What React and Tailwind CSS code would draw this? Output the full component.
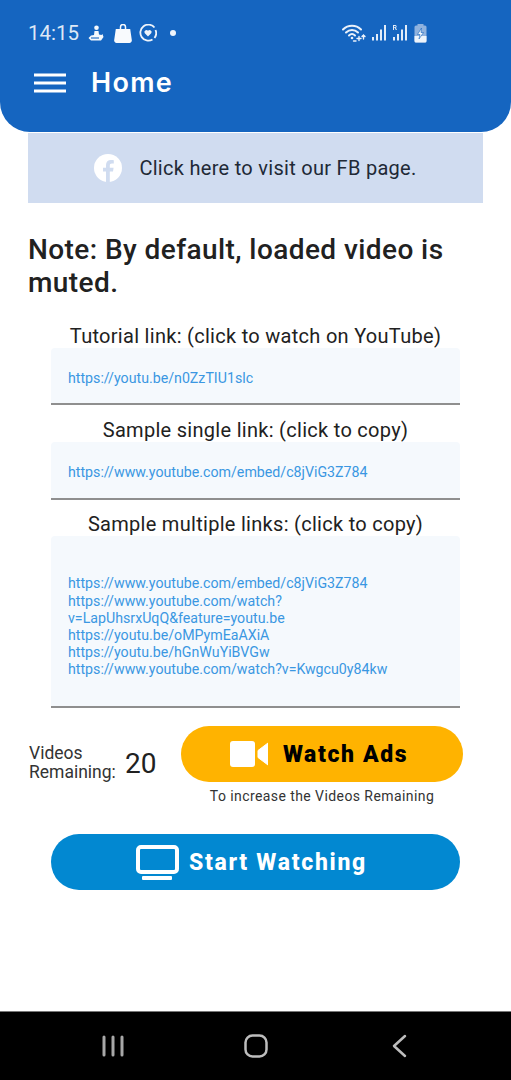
const roboto = "font-['Roboto',sans-serif]";

function Wifi() {
  return (
    <svg width="24" height="20" viewBox="0 0 24 20" fill="none" stroke="#eaf1fa" strokeLinecap="round">
      <path d="M1 6.500C6 1.500 14 1.500 19 6.500" strokeWidth="2" />
      <path d="M4 9.500C7.500 6 12.500 6 16 9.500" strokeWidth="2" />
      <path d="M7 12.500C9 10.500 11 10.500 13 12.500" strokeWidth="2" />
      <circle cx="10" cy="15" r="1.300" fill="#eaf1fa" stroke="none" />
      <path d="M15 15.500H19M17 13.500V17.500M21.500 16V12M20 13.500L21.500 12L23 13.500" strokeWidth="1.400" />
      <path d="M11.500 18H14" strokeWidth="1.400" />
    </svg>
  );
}

function Signal({ r }) {
  return (
    <svg width="16" height="18" viewBox="0 0 16 18" fill="#e2ecf8">
      <rect x="1" y="13" width="2" height="3.500" />
      <rect x="5" y="10" width="2" height="6.500" />
      <rect x="9" y="5.500" width="2" height="11" />
      <rect x="13" y="1" width="2" height="15.500" />
      {r ? <path d="M1 1h2.200a1.500 1.500 0 0 1 .7 2.800L5 6H3.800L2.900 4.100H2V6H1V1zm1 .9v1.400h1.100a.7.7 0 0 0 0-1.400H2z" /> : null}
    </svg>
  );
}

function Battery() {
  return (
    <svg width="13" height="19" viewBox="0 0 13 19">
      <rect x="3.500" y="0" width="6" height="2" fill="#8fb2de" />
      <rect x="0.500" y="1.500" width="12" height="17" rx="1.500" fill="#8fb2de" />
      <path d="M0.500 12H12.500V17A1.500 1.500 0 0 1 11 18.500H2A1.500 1.500 0 0 1 .5 17Z" fill="#eef4fb" />
      <path d="M7.500 4L3.500 10.500H6L5 15L9.500 8.500H7Z" fill="#f4f8fc" stroke="#1565c0" strokeWidth=".6" />
    </svg>
  );
}

function StatusBar() {
  return (
    <div className="flex h-[66px] items-center pl-[28px] pr-[84px]">
      <span className={`${roboto} text-[20.500px] text-[#dde8f6]`}>14:15</span>
      <svg className="ml-[9px]" width="16" height="17" viewBox="0 0 16 17" fill="#f4f8fc">
        <circle cx="8.500" cy="2.800" r="2.300" />
        <path d="M6.500 6H10.500L11 9.500L13.500 10L14.500 9L15.500 12L13 15.500H3L.5 13L3 10.500L6 10Z" />
        <path d="M3 13H11" stroke="#1565c0" strokeWidth="1.100" />
      </svg>
      <svg className="ml-[10px]" width="18" height="19" viewBox="0 0 18 19" fill="#f8fafd">
        <path d="M1.800 5H16.200L17.800 16A2.500 2.500 0 0 1 15.300 19H2.700A2.500 2.500 0 0 1 .2 16Z" />
        <path d="M6.500 6V3A2.500 2.500 0 0 1 11.500 3V6" fill="none" stroke="#f8fafd" strokeWidth="1.500" />
      </svg>
      <svg className="ml-[7px]" width="18" height="18" viewBox="0 0 18 18" fill="none" stroke="#eef4fb" strokeWidth="1.800">
        <path d="M13.500 15.500A8 8 0 1 1 15.500 3.500" />
        <path d="M16.500 6A8 8 0 0 1 15.500 14" />
        <path d="M9 12.500L5.800 9.200A2 2 0 0 1 9 6.800A2 2 0 0 1 12.200 9.200Z" fill="#eef4fb" stroke="none" />
      </svg>
      <span className="ml-[13px] h-[6px] w-[6px] rounded-full bg-[#eef4fb]" />
      <div className="ml-auto flex items-center">
        <Wifi />
        <span className="ml-[5px] flex"><Signal /></span>
        <span className="ml-[5px] flex"><Signal r /></span>
        <span className="ml-[6px] flex"><Battery /></span>
      </div>
    </div>
  );
}

function Field({ children, sizeClass }) {
  return (
    <div className={`flex ${sizeClass} w-[409px] items-center rounded-t-[4px] border-b-2 border-[#8f8f8f] bg-[#f5f9fd] px-[17px]`}>
      <div className={`${roboto} text-[14.200px] leading-[17.200px] text-[#3a97e2]`}>{children}</div>
    </div>
  );
}

function Label({ children, className = "" }) {
  return <p className={`${roboto} text-center text-[20px] leading-[24px] tracking-[0.290px] text-[#212121] ${className}`}>{children}</p>;
}

export default function App() {
  return (
    <div className="flex h-[1080px] w-[511px] flex-col overflow-hidden bg-white">
      <header className="h-[132px] shrink-0 rounded-b-[30px] bg-[#1565c0]">
        <StatusBar />
        <div className="flex items-center pl-[34px] pt-[1px]">
          <svg width="32" height="20" viewBox="0 0 32 20" fill="#fff">
            <rect x="0" y="0.500" width="32" height="3" />
            <rect x="0" y="8.500" width="32" height="3" />
            <rect x="0" y="16.500" width="32" height="3" />
          </svg>
          <h1 className="ml-[25px] font-['Inter',sans-serif] text-[27px] font-semibold leading-[32px] tracking-[1.300px] text-white">Home</h1>
        </div>
      </header>

      <div className="mx-[28px] mt-[1px] flex h-[70px] shrink-0 items-center justify-center bg-[#d0dcf0]">
        <svg width="28" height="28" viewBox="0 0 28 28">
          <circle cx="14" cy="14" r="14" fill="#fff" />
          <path d="M15.800 28V17.500H19L19.600 13.700H15.800V11.500C15.800 10.300 16.300 9.500 18 9.500H19.800V6.200C19 6 18 5.900 16.900 5.900C14 5.900 12 7.700 12 11V13.700H9V17.500H12V28Z" fill="#d0dcf0" />
        </svg>
        <span className={`${roboto} ml-[17px] text-[20px] tracking-[0.290px] text-[#212936]`}>Click here to visit our FB page.</span>
      </div>

      <h2 className={`${roboto} mx-[28px] mt-[30px] text-[28px] font-medium leading-[33px] tracking-[0.420px] text-[#212121]`}>
        Note: By default, loaded video is muted.
      </h2>

      <div className="mt-[25px] flex flex-col items-center">
        <Label>Tutorial link: (click to watch on YouTube)</Label>
        <Field sizeClass="h-[57px] pt-[7px]">https://youtu.be/n0ZzTIU1slc</Field>
        <Label className="mt-[13px]">Sample single link: (click to copy)</Label>
        <Field sizeClass="h-[58px] pt-[5px]">https://www.youtube.com/embed/c8jViG3Z784</Field>
        <Label className="mt-[12px]">Sample multiple links: (click to copy)</Label>
        <Field sizeClass="h-[172px] pt-[12px]">
          https://www.youtube.com/embed/c8jViG3Z784<br />
          https://www.youtube.com/watch?<br />
          v=LapUhsrxUqQ&amp;feature=youtu.be<br />
          https://youtu.be/oMPymEaAXiA<br />
          https://youtu.be/hGnWuYiBVGw<br />
          https://www.youtube.com/watch?v=Kwgcu0y84kw
        </Field>
      </div>

      <div className="ml-[29px] mt-[18px] flex items-start">
        <div className={`${roboto} mt-[18px] w-[96px] text-[17.500px] leading-[19px] text-[#333]`}>
          Videos<br />Remaining:
        </div>
        <div className={`${roboto} mt-[19px] w-[56px] text-[28px] leading-[38px] text-[#212121]`}>20</div>
        <div className="flex w-[282px] flex-col items-center">
          <button className="flex h-[56px] w-full items-center justify-center rounded-full bg-[#ffb300] pr-[6px]">
            <svg width="38" height="26" viewBox="0 0 38 26" fill="#fff">
              <rect x="0" y="0" width="25" height="26" rx="3" />
              <path d="M28 9.500L38 2V24L28 16.500Z" stroke="#fff" strokeWidth="1" strokeLinejoin="round" />
            </svg>
            <span className={`${roboto} ml-[15px] pt-[3px] text-[23px] font-black tracking-[1.600px] text-black`}>Watch Ads</span>
          </button>
          <p className={`${roboto} mt-[5px] text-[14px] leading-[18px] tracking-[0.420px] text-[#333]`}>To increase the Videos Remaining</p>
        </div>
      </div>

      <button className="mx-[51px] mt-[29px] flex h-[56px] w-[409px] shrink-0 items-center justify-center rounded-full bg-[#0288d1] pr-[8px]">
        <svg width="43" height="35" viewBox="0 0 43 35" fill="none">
          <rect x="2" y="2" width="39" height="25" rx="3" stroke="#fff" strokeWidth="4" />
          <rect x="6" y="31" width="30" height="4" rx="1" fill="#fff" />
        </svg>
        <span className={`${roboto} ml-[10px] pt-[3px] text-[23px] font-extrabold tracking-[1.700px] text-white`}>Start Watching</span>
      </button>

      <nav className="mt-auto flex h-[69px] shrink-0 items-center border-t border-[#777] bg-black pt-[1px]">
        <div className="flex w-full items-center pb-[1px]">
          <svg className="ml-[102px]" width="22" height="22" viewBox="0 0 22 22" stroke="#a8a8a8" strokeWidth="3" strokeLinecap="round">
            <path d="M2 2V20M11 2V20M20 2V20" />
          </svg>
          <svg className="ml-[120px]" width="24" height="24" viewBox="0 0 24 24" fill="none" stroke="#bdbdbd" strokeWidth="2.500">
            <rect x="1.500" y="1.500" width="21" height="21" rx="7" />
          </svg>
          <svg className="ml-[124px]" width="16" height="24" viewBox="0 0 16 24" fill="none" stroke="#bdbdbd" strokeWidth="2.500" strokeLinecap="round" strokeLinejoin="round">
            <path d="M13 2L2 12L13 22" />
          </svg>
        </div>
      </nav>
    </div>
  );
}
